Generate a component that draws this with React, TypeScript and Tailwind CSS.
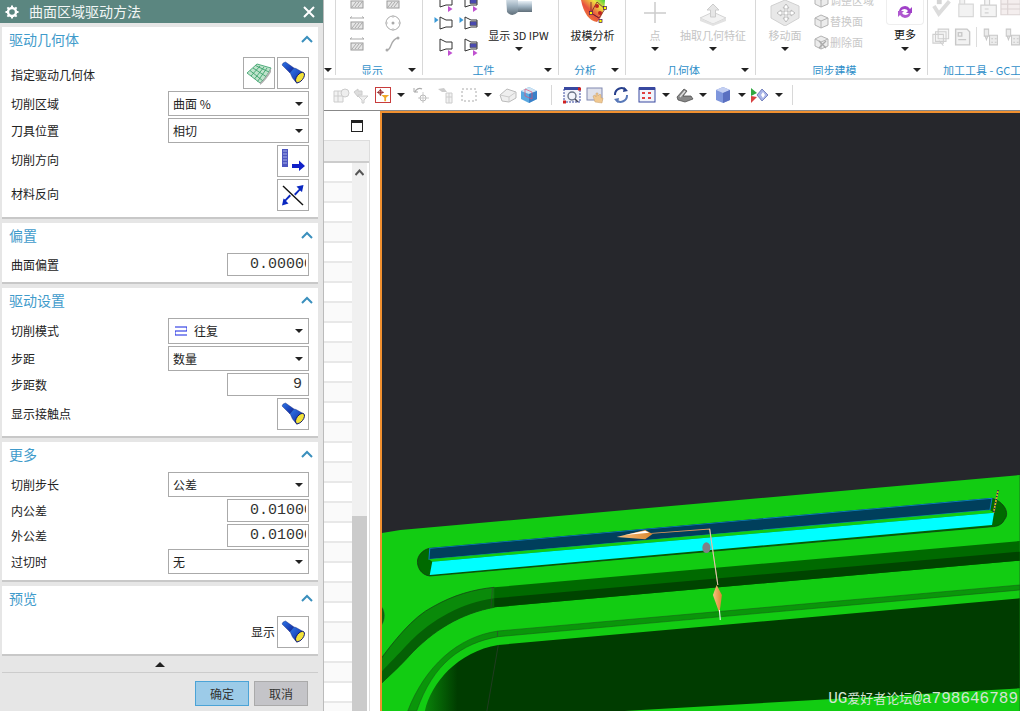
import React from "react"

const Tri = () => <div className="h-0 w-0 border-x-[4px] border-t-[4px] border-x-transparent border-t-[#222]" />

const Flashlight = () => (
  <svg width="24" height="24" viewBox="0 0 24 24">
    <defs>
      <linearGradient id="fl" x1="0" y1="0" x2="1" y2="1">
        <stop offset="0" stopColor="#2f78e8" />
        <stop offset="1" stopColor="#0a1f9a" />
      </linearGradient>
    </defs>
    <path d="M1 4 Q1.5 1.5 4.5 1 L13 7 L9 12 Z" fill="url(#fl)" stroke="#0b1a70" strokeWidth="0.4" />
    <path d="M9 11.5 L13 7 L15 7.5 L23 12 L16 22.5 L11.5 17 Z" fill="url(#fl)" stroke="#0b1a70" strokeWidth="0.4" />
    <ellipse cx="19" cy="16.5" rx="6" ry="3.2" transform="rotate(-52 19 16.5)" fill="#f2e23a" stroke="#0a1470" strokeWidth="0.9" />
  </svg>
)

const SurfaceIcon = () => (
  <svg width="26" height="24" viewBox="0 0 26 24">
    <path d="M1 12 L11 3 L25 7 C22 13 18 19 14 22 Z" fill="#bfe3cc" stroke="#2f9c62" strokeWidth="0.8" />
    <path d="M4 9.5 L17 20 M7 7 L20 15.5 M9.5 4.5 L23 11 M5 15 L14 5 M8.5 18 L18 6 M11.5 20.5 L21 7" stroke="#2f9c62" strokeWidth="0.8" fill="none" />
    <path d="M14 22 C18 19 22 13 25 7 L25 11 C22 16 18 21 14 24 Z" fill="#b0b0b0" />
  </svg>
)

const DirectionIcon = () => (
  <svg width="26" height="26" viewBox="0 0 26 26">
    <rect x="2" y="1" width="6" height="18" fill="#4d56c0" />
    <path d="M3 3 h4 M3 6 h4 M3 9 h4 M3 12 h4 M3 15 h4" stroke="#a8b0e8" strokeWidth="1" />
    <path d="M12 16 H19 V12.5 L25 18 L19 23 V20 H12 Z" fill="#1020c8" />
  </svg>
)

const SwapIcon = () => (
  <svg width="24" height="24" viewBox="0 0 24 24">
    <path d="M2 3 L22 22" stroke="#111" strokeWidth="1.4" />
    <path d="M13 11 L18 6 L15.5 3.5 L22.5 2 L21 9 L19 7.5 L14.5 12.5 Z" fill="#0a28c0" />
    <path d="M10 13 L5 18 L7.5 20.5 L1 22.5 L2.5 15.5 L4 16.5 L8.5 11.5 Z" fill="#0a28c0" />
  </svg>
)

const IconButton = ({ children }: { children: React.ReactNode }) => (
  <button className="flex h-[32px] w-[32px] items-center justify-center border border-[#aaa] bg-white">{children}</button>
)

const Select = ({ children, tall }: { children: React.ReactNode; tall?: boolean }) => (
  <div className={tall ? "flex h-[26px] w-[141px] items-center justify-between border border-[#aaa] bg-white pl-[4px] pr-[5px] text-[12px] text-[#222]" : "flex h-[25px] w-[141px] items-center justify-between border border-[#aaa] bg-white pl-[4px] pr-[5px] text-[12px] text-[#222]"}>
    <div className="flex items-center">{children}</div>
    <Tri />
  </div>
)

const NumberInput = ({ value, alignRight }: { value: string; alignRight?: boolean }) => (
  <div className={alignRight ? "flex h-[23px] w-[82px] items-center justify-end border border-[#aaa] bg-white pr-[6px] pt-[2px]" : "flex h-[23px] w-[82px] items-center border border-[#aaa] bg-white pl-[22px] pr-[2px] pt-[2px]"}>
    <div className="overflow-hidden whitespace-nowrap font-['Liberation_Mono',monospace] text-[15px] text-[#333]">{value}</div>
  </div>
)

const Row = ({ label, labelCls, children }: { label: string; labelCls?: string; children: React.ReactNode }) => (
  <div className="flex items-center justify-between px-[9px]">
    <span className={`${labelCls ?? ""} text-[12px] text-[#222]`}>{label}</span>
    {children}
  </div>
)

const Section = ({ title, children }: { title: string; children: React.ReactNode }) => (
  <section className="border-b-2 border-[#c8c8c8] bg-white pb-[6px]">
    <div className="flex h-[30px] items-center justify-between pb-[6px] pl-[7px] pr-[5px]">
      <span className="text-[14px] text-[#3f9bcb]">{title}</span>
      <svg width="12" height="8" viewBox="0 0 12 8">
        <path d="M1 7 L6 2 L11 7" stroke="#3a8fbd" strokeWidth="2" fill="none" />
      </svg>
    </div>
    <div className="flex flex-col gap-[2px]">{children}</div>
  </section>
)

const Dialog = () => (
  <div className="flex h-full w-[324px] shrink-0 flex-col border-r border-[#bbb] bg-[#e6e6e6]">
    <div className="flex h-[23px] items-center justify-between bg-[#5b8680] pl-[5px] pr-[8px] text-white">
      <div className="flex items-center">
        <svg width="14" height="14" viewBox="0 0 14 14">
          <circle cx="7" cy="7" r="4" fill="none" stroke="#fff" strokeWidth="2.4" />
          <path d="M7 0.5 V3 M7 11 V13.5 M0.5 7 H3 M11 7 H13.5 M2.4 2.4 L4 4 M10 10 L11.6 11.6 M2.4 11.6 L4 10 M10 4 L11.6 2.4" stroke="#fff" strokeWidth="2" />
        </svg>
        <span className="ml-[10px] text-[14px] text-[#f2f6f5]">曲面区域驱动方法</span>
      </div>
      <svg width="12" height="12" viewBox="0 0 12 12">
        <path d="M1 1 L11 11 M11 1 L1 11" stroke="#fff" strokeWidth="2" />
      </svg>
    </div>
    <div className="flex flex-col gap-[4px] px-[2px] pr-[5px] pt-[4px]">
      <Section title="驱动几何体">
        <Row label="指定驱动几何体" labelCls="mt-[4px]">
          <div className="flex gap-[2px]">
            <IconButton><SurfaceIcon /></IconButton>
            <IconButton><Flashlight /></IconButton>
          </div>
        </Row>
        <Row label="切削区域"><Select>曲面 %</Select></Row>
        <Row label="刀具位置"><Select>相切</Select></Row>
        <Row label="切削方向" labelCls="-mt-[2px]"><IconButton><DirectionIcon /></IconButton></Row>
        <Row label="材料反向" labelCls="-mt-[2px]"><IconButton><SwapIcon /></IconButton></Row>
      </Section>
      <Section title="偏置">
        <Row label="曲面偏置"><NumberInput value="0.00000" /></Row>
      </Section>
      <Section title="驱动设置">
        <Row label="切削模式">
          <Select tall>
            <svg width="12" height="10" viewBox="0 0 12 10" className="ml-[2px] mr-[7px]">
              <path d="M0 1 H12 M12 5 H0 M0 9 H12 M12 1 V5 M0 5 V9" stroke="#1020e0" strokeWidth="1" fill="none" />
            </svg>
            往复
          </Select>
        </Row>
        <Row label="步距"><Select>数量</Select></Row>
        <Row label="步距数"><NumberInput value="9" alignRight /></Row>
        <Row label="显示接触点"><IconButton><Flashlight /></IconButton></Row>
      </Section>
      <Section title="更多">
        <Row label="切削步长"><Select>公差</Select></Row>
        <Row label="内公差"><NumberInput value="0.01000" /></Row>
        <Row label="外公差"><NumberInput value="0.01000" /></Row>
        <Row label="过切时"><Select>无</Select></Row>
      </Section>
      <Section title="预览">
        <div className="flex items-center justify-end gap-[2px] px-[9px]">
          <span className="text-[12px] text-[#222]">显示</span>
          <IconButton><Flashlight /></IconButton>
        </div>
      </Section>
    </div>
    <div className="mx-[2px] mr-[5px] flex h-[17px] items-center justify-center border-b border-[#ccc]">
      <div className="h-0 w-0 border-x-[5px] border-b-[5px] border-x-transparent border-b-[#222]" />
    </div>
    <div className="flex justify-end gap-[5px] pr-[15px] pt-[8px]">
      <button className="h-[25px] w-[54px] border border-[#4ba3d6] bg-[#9ccbe8] text-[12px] text-[#333]">确定</button>
      <button className="h-[25px] w-[54px] border border-[#aaa] bg-[#c4c4c8] text-[12px] text-[#333]">取消</button>
    </div>
  </div>
)

const RibbonGroup = ({ label, width, children }: { label: string; width: string; children?: React.ReactNode }) => (
  <div className={`${width} h-[75px] shrink-0 overflow-hidden border-r border-[#d8d8d8]`}>
    <div className="flex h-[62px] overflow-hidden">{children}</div>
    <div className="flex h-[16px] items-center justify-between pr-[6px]">
      <span className="flex-1 text-center text-[11px] text-[#2f8fc9]">{label}</span>
      <Tri />
    </div>
  </div>
)

const LargeTool = ({ icon, text, width, disabled }: { icon: React.ReactNode; text: string; width: string; disabled?: boolean }) => (
  <div className={`${width} flex shrink-0 flex-col items-center`}>
    <div className="flex h-[26px] items-end justify-center overflow-visible">{icon}</div>
    <div className={disabled ? "flex h-[18px] items-center whitespace-nowrap text-[11px] text-[#c4c4c4]" : "flex h-[18px] items-center whitespace-nowrap text-[11px] text-[#222]"}>{text}</div>
    <div className="mt-[3px]"><Tri /></div>
  </div>
)

const Tool = ({ filled, mark }: { filled?: boolean; mark: "left" | "bottom" }) => (
  <svg width="24" height="20" viewBox="0 0 24 20">
    <path d="M6 3 L12 6 H18 V13 H12 L6 15 Z" fill="#fff" stroke="#333" strokeWidth="1" />
    {filled && <path d="M11 7.5 H17.5 V11.5 H11 Z" fill="#4a4ab0" stroke="#333" strokeWidth="0.5" />}
    {mark === "left" ? <path d="M0.5 3 L4.5 6 L0.5 9 Z" fill="#3a9ad8" /> : <path d="M14 14 L18.5 17 L14 20 Z" fill="#c050d0" />}
  </svg>
)

const GrayBox = ({ arrow }: { arrow?: boolean }) => (
  <svg width="16" height="16" viewBox="0 0 16 16">
    {arrow && <path d="M1 3 H15 M1 3 L3 1.5 M15 3 L13 1.5" stroke="#aaa" strokeWidth="1" fill="none" />}
    <rect x="2" y="7" width="12" height="7" fill="#e6e6e6" stroke="#999" />
    <path d="M3 13 L7 8 M6 13 L10 8 M9 13 L13 8" stroke="#aaa" strokeWidth="1" />
  </svg>
)

const SmallFace = ({ text, icon }: { text: string; icon: React.ReactNode }) => (
  <div className="flex h-[21px] items-center whitespace-nowrap">
    <div className="flex w-[18px] justify-center">{icon}</div>
    <span className="text-[11px] text-[#c8c8c8]">{text}</span>
  </div>
)

const CubeGray = ({ mark }: { mark?: boolean }) => (
  <svg width="15" height="15" viewBox="0 0 15 15">
    <path d="M1 4 L7 1 L14 4 V11 L7 14 L1 11 Z" fill="#ececec" stroke="#b4b4b4" />
    <path d="M1 4 L7 7 L14 4 M7 7 V14" stroke="#b4b4b4" fill="none" />
    {mark && <path d="M5 6 L12 13 M12 6 L5 13" stroke="#aaa" strokeWidth="1.4" />}
  </svg>
)

const DisabledTile = ({ kind }: { kind: number }) => (
  <svg width="22" height="22" viewBox="0 0 22 22">
    {kind === 0 && <path d="M2 9 L7 17 L18 4" stroke="#dcdcdc" strokeWidth="4" fill="none" />}
    {kind === 0 && <path d="M5 1 H10 V7 H5 Z" fill="#d4d4d4" />}
    {kind === 1 && <path d="M5 7 H20 V20 H5 Z M6 1 H11 V7 H6 Z" stroke="#d8d8d8" strokeWidth="1.2" fill="#f2f2f2" />}
    {kind === 2 && <path d="M4 8 H20 V20 H4 Z M8 1 H13 V8 H8 Z M8 12 H12 M8 16 H12" stroke="#d0d0d0" strokeWidth="1.2" fill="#f4f4f4" />}
    {kind === 3 && <path d="M2 2 H22 V18 H2 Z M2 7 H22 M2 12 H22 M9 2 V18" stroke="#dcd4d4" strokeWidth="1.2" fill="#f4eeee" />}
    {kind === 4 && <path d="M7 2 H19 V13 H7 Z M4 5 H16 V16 H4 Z M1 8 H13 V18 H1 Z M8 15 L13 21" stroke="#cfcfcf" strokeWidth="1.2" fill="#f6f6f6" />}
    {kind === 5 && <path d="M3 2 H16 L19 5 V20 H3 Z M6 6 H10 V10 H6 Z M6 14 H15" stroke="#c8c8c8" strokeWidth="1.6" fill="#f2f2f2" />}
    {kind === 6 && <path d="M6 2 H11 V10 H6 Z M7 10 H10 L8.5 14 Z M12 9 H21 V20 H12 Z M14 13 H16 M18 13 H20 M14 17 H16 M18 17 H20" stroke="#c8c8c8" strokeWidth="1.2" fill="#ececec" />}
  </svg>
)

const Ribbon = () => (
  <div className="flex h-[80px] shrink-0 overflow-hidden border-b-2 border-[#dedede] bg-white">
    <RibbonGroup label="" width="w-[12px]" />
    <RibbonGroup label="显示" width="w-[87px]">
      <div className="-mt-[9px] ml-[3px] grid grid-cols-[36px_36px] auto-rows-[21px] place-items-center">
        <GrayBox /><GrayBox />
        <GrayBox arrow />
        <svg width="16" height="16" viewBox="0 0 16 16"><circle cx="8" cy="8" r="7" fill="#fff" stroke="#aaa" /><circle cx="8" cy="8" r="1.5" fill="#aaa" /><path d="M8 0 V3 M8 13 V16 M0 8 H3 M13 8 H16" stroke="#c4c4c4" /></svg>
        <GrayBox arrow />
        <svg width="16" height="16" viewBox="0 0 16 16"><path d="M2 14 C7 14 5 3 13 2" stroke="#aaa" strokeWidth="1.4" fill="none" /><circle cx="2" cy="14" r="1.5" fill="#aaa" /><circle cx="13" cy="2" r="1.5" fill="#aaa" /></svg>
      </div>
    </RibbonGroup>
    <RibbonGroup label="工件" width="w-[136px]">
      <div className="-mt-[9px] ml-[10px] grid grid-cols-[25px_25px] auto-rows-[22px] place-items-center">
        <Tool mark="bottom" /><Tool filled mark="bottom" />
        <Tool mark="left" /><Tool filled mark="left" />
        <Tool mark="bottom" /><Tool filled mark="bottom" />
      </div>
      <LargeTool
        width="w-[71px]"
        text="显示 3D IPW"
        icon={
          <svg width="26" height="20" viewBox="0 0 26 20" className="mb-[9px]">
            <defs>
              <linearGradient id="ipw" x1="0" y1="0" x2="0" y2="1">
                <stop offset="0" stopColor="#e8f0f6" />
                <stop offset="0.5" stopColor="#9fb2c0" />
                <stop offset="1" stopColor="#5f6e79" />
              </linearGradient>
            </defs>
            <path d="M0 0 H12 V15 Q6 21 1 15 Z" fill="url(#ipw)" />
            <rect x="12" y="4" width="14" height="11" fill="url(#ipw)" />
          </svg>
        }
      />
    </RibbonGroup>
    <RibbonGroup label="分析" width="w-[67px]">
      <LargeTool
        width="w-[67px]"
        text="拔模分析"
        icon={
          <svg width="34" height="26" viewBox="0 0 34 26" className="ml-[3px]">
            <defs>
              <linearGradient id="draft" x1="0" y1="1" x2="1" y2="0">
                <stop offset="0" stopColor="#f2a030" />
                <stop offset="0.45" stopColor="#e85040" />
                <stop offset="0.75" stopColor="#f0e040" />
                <stop offset="1" stopColor="#40d040" />
              </linearGradient>
            </defs>
            <path d="M4 0 H28 Q28 14 20 22 Q8 20 4 0 Z" fill="url(#draft)" />
            <path d="M14 2 L14 13 L22 18 L28 9 L20 2 L14 13 M22 18 L14 13" stroke="#702030" strokeWidth="0.8" fill="none" />
            <circle cx="20" cy="6" r="2" fill="#c02020" /><circle cx="23" cy="13" r="2" fill="#c02020" />
            <rect x="12.5" y="11.5" width="3" height="3" fill="#ff0" stroke="#401060" strokeWidth="0.7" />
            <rect x="26.5" y="6.5" width="3" height="3" fill="#ff0" stroke="#401060" strokeWidth="0.7" />
            <rect x="22" y="19.5" width="3" height="3" fill="#ff0" stroke="#401060" strokeWidth="0.7" />
          </svg>
        }
      />
    </RibbonGroup>
    <RibbonGroup label="几何体" width="w-[130px]">
      <LargeTool
        width="w-[58px]"
        text="点"
        disabled
        icon={<svg width="24" height="24" viewBox="0 0 24 24"><path d="M12 0 V21 M1 11 H23" stroke="#ccc" strokeWidth="1.5" /></svg>}
      />
      <LargeTool
        width="w-[58px]"
        text="抽取几何特征"
        disabled
        icon={
          <svg width="28" height="24" viewBox="0 0 28 24">
            <path d="M1 16 L14 10 L27 16 L14 22 Z" fill="#f2f2f2" stroke="#d4d4d4" />
            <path d="M1 16 V19 L14 24 L27 19 V16 L14 22 Z" fill="#e2e2e2" />
            <path d="M14 2 L20 8 H16.5 V15 H11.5 V8 H8 Z" fill="#e6e6e6" stroke="#ccc" />
          </svg>
        }
      />
    </RibbonGroup>
    <RibbonGroup label="同步建模" width="w-[172px]">
      <div className="ml-[2px] w-[54px] shrink-0">
        <LargeTool
          width="w-[54px]"
          text="移动面"
          disabled
          icon={
            <svg width="30" height="26" viewBox="0 0 30 26">
              <path d="M1 6 L15 0 L29 6 V18 L15 26 L1 18 Z" fill="#e8e8e8" stroke="#d0d0d0" />
              <path d="M16 4 L19 8 H17 V12 H21 V10 L25 13 L21 16 V14 H17 V18 H19 L16 22 L13 18 H15 V14 H11 V16 L7 13 L11 10 V12 H15 V8 H13 Z" fill="#fff" stroke="#bbb" />
            </svg>
          }
        />
      </div>
      <div className="-mt-[10px] w-[74px] shrink-0">
        <SmallFace text="调整区域" icon={<CubeGray />} />
        <SmallFace text="替换面" icon={<CubeGray />} />
        <SmallFace text="删除面" icon={<CubeGray mark />} />
      </div>
      <div className="flex w-[38px] shrink-0 flex-col items-center">
        <div className="flex h-[25px] w-[38px] items-center justify-center rounded-b-[4px] border border-t-0 border-[#eee] bg-white">
          <svg width="16" height="16" viewBox="0 0 16 16">
            <path d="M2 7 A6 6 0 0 1 13 5 L15 3 V9 H9 L11 7 A4 4 0 0 0 4 7 Z" fill="#a040c8" />
            <path d="M14 9 A6 6 0 0 1 3 11 L1 13 V7 H7 L5 9 A4 4 0 0 0 12 9 Z" fill="#b058d0" />
          </svg>
        </div>
        <div className="flex h-[18px] items-center whitespace-nowrap text-[11px] text-[#111]">更多</div>
        <div className="mt-[4px]"><Tri /></div>
      </div>
    </RibbonGroup>
    <div className="h-[75px] flex-1 overflow-hidden">
      <div className="flex h-[62px] flex-col gap-[7px] overflow-hidden pl-[4px]">
        <div className="-mt-[3px] flex gap-[1px]">
          <DisabledTile kind={0} /><DisabledTile kind={1} /><DisabledTile kind={2} /><DisabledTile kind={3} />
        </div>
        <div className="flex items-center gap-[2px]">
          <DisabledTile kind={4} /><DisabledTile kind={5} />
          <div className="mx-[1px] h-[20px] w-px bg-[#ddd]" />
          <DisabledTile kind={6} /><DisabledTile kind={6} />
        </div>
      </div>
      <div className="flex h-[16px] items-center whitespace-nowrap pl-[15px] text-[11px] text-[#2f8fc9]">加工工具 - GC工具箱</div>
    </div>
  </div>
)

const Bar = ({ cls }: { cls: string }) => <div className={`${cls} h-[20px] w-px shrink-0 bg-[#d8d8d8]`} />
const BarTri = ({ cls }: { cls: string }) => <div className={`${cls} shrink-0`}><Tri /></div>
const Ic = ({ cls, children }: { cls: string; children: React.ReactNode }) => (
  <svg width="18" height="18" viewBox="0 0 18 18" className={`${cls} shrink-0`}>{children}</svg>
)

const Toolbar = () => (
  <div className="flex h-[31px] shrink-0 items-center overflow-hidden border-b border-[#888] bg-white pl-[8px]">
    <Ic cls="">
      <path d="M2 5 H11 V16 H2 Z M2 10 H11 M6 5 V16" stroke="#ccc" fill="#f2f2f2" />
      <circle cx="13" cy="7" r="4" fill="#eee" stroke="#ccc" />
    </Ic>
    <Ic cls="ml-[2px]">
      <path d="M2 6 L6 3 V5 H10 V9 H6 V11 Z" fill="#ddd" stroke="#ccc" />
      <path d="M6 10 H16 L12 14 V17 H10 V14 Z" fill="#efefef" stroke="#ccc" />
    </Ic>
    <svg width="16" height="16" viewBox="0 0 16 16" className="ml-[5px] shrink-0 border border-[#c83c3c]">
      <path d="M5 1 V9 M1 5 H9" stroke="#902020" strokeWidth="1" />
      <circle cx="5" cy="5" r="2.2" fill="none" stroke="#902020" />
      <path d="M6 8 H15 L11.5 11 V15 H9.5 V11 Z" fill="#f0a828" />
    </svg>
    <BarTri cls="ml-[6px]" />
    <Ic cls="ml-[7px]">
      <path d="M3 6 A5 5 0 0 1 10 3" fill="none" stroke="#aaa" strokeWidth="1.2" />
      <path d="M2 2 V6 H6" fill="none" stroke="#aaa" />
      <path d="M11 6 V17 M6 12 H17" stroke="#ccc" /><circle cx="11" cy="12" r="3" fill="none" stroke="#bbb" />
    </Ic>
    <Ic cls="ml-[6px]">
      <path d="M2 3 L8 2 L11 6 L6 6 Z" fill="#ccc" /><path d="M10 7 H16 V17 H10 Z M10 11 H16 M13 7 V17" stroke="#ccc" fill="#f2f2f2" />
    </Ic>
    <Ic cls="ml-[6px]"><path d="M2 3 H16 V15 H2 Z" fill="none" stroke="#aaa" strokeDasharray="2 2" /></Ic>
    <BarTri cls="ml-[6px]" />
    <Ic cls="ml-[7px]">
      <path d="M1 9 L8 3 L17 6 V12 L10 16 L3 15 Z" fill="#efefef" stroke="#bbb" /><path d="M1 9 L10 11 L17 6 M10 11 V16" stroke="#ccc" fill="none" />
    </Ic>
    <Ic cls="ml-[3px]">
      <path d="M1 5 L9 1 L17 5 V13 L9 17 L1 13 Z" fill="#5aa8e0" /><path d="M1 5 L9 8 L17 5 L9 1 Z" fill="#cfe4f4" /><path d="M9 8 V17 L17 13 V5 Z" fill="#3a80c8" />
      <path d="M5 3 V10 L12 13 V6 M5 3 L12 6" stroke="#e05070" strokeWidth="0.7" fill="none" />
    </Ic>
    <Bar cls="ml-[13px]" />
    <Ic cls="ml-[11px]">
      <rect x="1" y="2" width="16" height="14" fill="#f2f4fb" stroke="#3848a0" strokeDasharray="2 1" /><rect x="1" y="1" width="16" height="3" fill="#3848a0" />
      <circle cx="9" cy="10" r="4" fill="none" stroke="#6a7488" strokeWidth="1.4" /><path d="M12 13 L15 16" stroke="#445" strokeWidth="1.5" />
      <rect x="0" y="14.5" width="3" height="3" fill="#d02020" /><rect x="15" y="1.5" width="3" height="3" fill="#d02020" />
    </Ic>
    <Ic cls="ml-[5px]">
      <rect x="1" y="2" width="15" height="12" fill="#e0e2ec" stroke="#8088b0" />
      <path d="M9 16 L7 10 L9 9 L10 11 L10 7 L12 7 L12 10 L14 8 L15 9 L15 12 L17 12 L16 17 Z" fill="#f0c890" stroke="#c8a070" strokeWidth="0.5" />
    </Ic>
    <Ic cls="ml-[8px]">
      <path d="M3 9 A6.5 6.5 0 0 1 14 4" fill="none" stroke="#28408c" strokeWidth="2" /><path d="M15 9 A6.5 6.5 0 0 1 4 14" fill="none" stroke="#5878b8" strokeWidth="2" />
      <path d="M12 1 L16 5 L11 6 Z" fill="#28408c" /><path d="M6 17 L2 13 L7 12 Z" fill="#5878b8" />
    </Ic>
    <Ic cls="ml-[8px]">
      <rect x="1" y="2" width="16" height="14" fill="#f2f4fb" stroke="#3848a0" /><rect x="1" y="1" width="16" height="3" fill="#3848a0" />
      <path d="M4 6 H7 V8 H4 Z M10 6 H13 V8 H10 Z M4 11 H7 V13 H4 Z M10 11 H13 V13 H10 Z" fill="#e04040" />
    </Ic>
    <BarTri cls="ml-[6px]" />
    <Ic cls="ml-[6px]">
      <path d="M1 11 L8 3 L11 5 L7 10 L15 10 L17 13 L9 16 L2 14 Z" fill="#888" stroke="#444" strokeWidth="0.7" /><path d="M4 11 L9 5" stroke="#e0e0e0" strokeWidth="1.4" />
    </Ic>
    <BarTri cls="ml-[5px]" />
    <Ic cls="ml-[7px]">
      <path d="M2 4 L9 1 L16 4 V14 L9 17 L2 14 Z" fill="#7e96dc" /><path d="M2 4 L9 7 L16 4 L9 1 Z" fill="#c4d0f2" /><path d="M9 7 V17 L16 14 V4 Z" fill="#5a70c0" />
    </Ic>
    <BarTri cls="ml-[6px]" />
    <Ic cls="ml-[4px]">
      <path d="M1 2 L7 7 L1 10 Z" fill="#30a840" /><path d="M1 10 L7 11 L1 17 Z" fill="#d84040" />
      <path d="M7 9 L12 3 L18 9 L12 15 Z" fill="#a8b4e8" stroke="#5060a8" strokeWidth="0.7" /><path d="M11 9 L13 6 L15 9 L13 12 Z" fill="#fff" />
    </Ic>
    <BarTri cls="ml-[7px]" />
    <Bar cls="ml-[9px]" />
  </div>
)

const Navigator = () => (
  <div className="flex h-full w-[56px] shrink-0 flex-col bg-white">
    <div className="flex h-[29px] shrink-0 items-center justify-end pr-[17px]">
      <div className="h-[12px] w-[12px] border border-t-[3px] border-[#222]" />
    </div>
    <div className="flex min-h-0 w-[46px] flex-1 flex-col border-r border-t border-[#ddd]">
      <div className="h-[22px] shrink-0 border-b-2 border-[#ccc] bg-[#f0f0f0]" />
      <div className="flex min-h-0 flex-1">
        <div className="w-[28px] shrink-0 overflow-hidden">
          {Array.from({ length: 28 }).map((_, i) => (
            <div key={i} className={i % 2 === 0 ? "h-[20px] border-b-2 border-[#e8e8e8] bg-white" : "h-[20px] border-b-2 border-[#e8e8e8] bg-[#fafafa]"} />
          ))}
        </div>
        <div className="flex w-[15px] shrink-0 flex-col bg-[#f0f0f0]">
          <div className="flex h-[353px] shrink-0 justify-center pt-[6px]">
            <svg width="9" height="7" viewBox="0 0 9 7"><path d="M0.5 6 L4.5 1.5 L8.5 6" stroke="#555" strokeWidth="2" fill="none" /></svg>
          </div>
          <div className="flex-1 bg-[#cbcbcb]" />
        </div>
      </div>
    </div>
  </div>
)

const Scene = () => (
  <svg viewBox="382 113 638 598" className="block h-full w-full" preserveAspectRatio="none">
    <defs>
      <linearGradient id="cav" gradientUnits="userSpaceOnUse" x1="100" y1="0" x2="190" y2="0">
        <stop offset="0" stopColor="#0b8c0b" />
        <stop offset="1" stopColor="#003c00" />
      </linearGradient>
      <linearGradient id="cone" x1="0" y1="0" x2="1" y2="0">
        <stop offset="0" stopColor="#f8c080" />
        <stop offset="1" stopColor="#d88830" />
      </linearGradient>
    </defs>
    <rect x="380" y="112" width="640" height="600" fill="#26272c" />
    <g transform="translate(380 470) scale(0.408 0.3333)">
      <path d="M0 190 L50 180 L1568 15 V723 H0 Z" fill="#12cc12" />
      <path d="M0 405 C14 420 14 455 0 470 Z" fill="#0a6a0a" stroke="#334" />
      <path d="M280 352 C230 358 180 375 130 410 C80 440 30 520 0 570 V645 C15 625 40 600 70 560 C130 480 200 430 280 412 Z" fill="#0a8a0a" stroke="#164016" strokeWidth="2" />
      <path d="M280 385 C200 400 130 445 70 520 C40 560 15 590 0 610 V645 C15 625 40 600 70 560 C130 480 200 430 280 412 Z" fill="#056005" />
      <path d="M280 352 L1568 213 V272 L280 412 Z" fill="#006a00" />
      <path d="M280 385 L1568 245 V272 L280 412 Z" fill="#004400" />
      <path d="M290 483 L1568 345 V360 L290 500 C200 520 130 580 90 723 H68 C110 590 190 500 290 483 Z" fill="#0a960a" stroke="#1a5a1a" strokeWidth="1.5" />
      <path d="M290 525 L1568 385 V655 L640 720 L600 723 H110 C125 640 190 545 290 525 Z" fill="url(#cav)" />
      <path d="M290 525 L262 723 M276 352 L272 412 M288 483 V500" stroke="#3a3a3a" strokeWidth="1.5" />
      <path d="M122 235 L1500 85 C1530 95 1545 130 1530 150 C1525 165 1510 170 1500 170 L122 318 C100 315 90 290 92 270 C95 250 110 237 122 235 Z" fill="#006a00" stroke="#153515" strokeWidth="2" />
      <path d="M122 235 L1500 85 L1495 120 L120 268 Z" fill="#003f5c" stroke="#0a80c0" strokeWidth="2.5" />
      <path d="M120 268 L1495 120 L1505 128 L128 275 Z" fill="#12cc12" />
      <path d="M128 275 L1505 128 L1500 165 L122 315 Z" fill="#00ffff" />
      <path d="M1515 60 L1504 128" stroke="#f0c020" strokeWidth="4" />
      <path d="M1515 60 L1504 128" stroke="#202060" strokeWidth="4" strokeDasharray="4 5" />
      <path d="M665 190 L808 177 L828 345" fill="none" stroke="#e09858" strokeWidth="2.5" />
      <path d="M808 177 L828 345" stroke="#d8d8d8" strokeWidth="2" />
      <path d="M580 201 L650 180 L668 192 L650 208 Z" fill="url(#cone)" />
      <path d="M600 195 L650 182 L660 188 Z" fill="#fff" />
      <ellipse cx="800" cy="233" rx="10" ry="16" fill="#808088" />
      <path d="M825 345 L838 375 L832 430 L816 375 Z" fill="url(#cone)" />
      <path d="M832 420 L834 450" stroke="#fff" strokeWidth="2.5" />
    </g>
  </svg>
)

const App = () => (
  <div className="flex h-[711px] w-[1020px] overflow-hidden bg-white font-['Noto_Sans_CJK_SC','Microsoft_YaHei',sans-serif]">
    <Dialog />
    <div className="flex min-w-0 flex-1 flex-col">
      <Ribbon />
      <Toolbar />
      <div className="flex min-h-0 flex-1">
        <Navigator />
        <div className="relative min-w-0 flex-1 border-l-2 border-t-2 border-[#f09030]">
          <Scene />
          <div className="absolute bottom-0 right-[2px] flex items-baseline whitespace-nowrap font-['Liberation_Mono','Noto_Sans_CJK_SC',monospace] text-[16px] text-[#d4e4d4]">
            UG<span className="text-[13px]">爱好者论坛</span>@a798646789
          </div>
        </div>
      </div>
    </div>
  </div>
)

export default App
